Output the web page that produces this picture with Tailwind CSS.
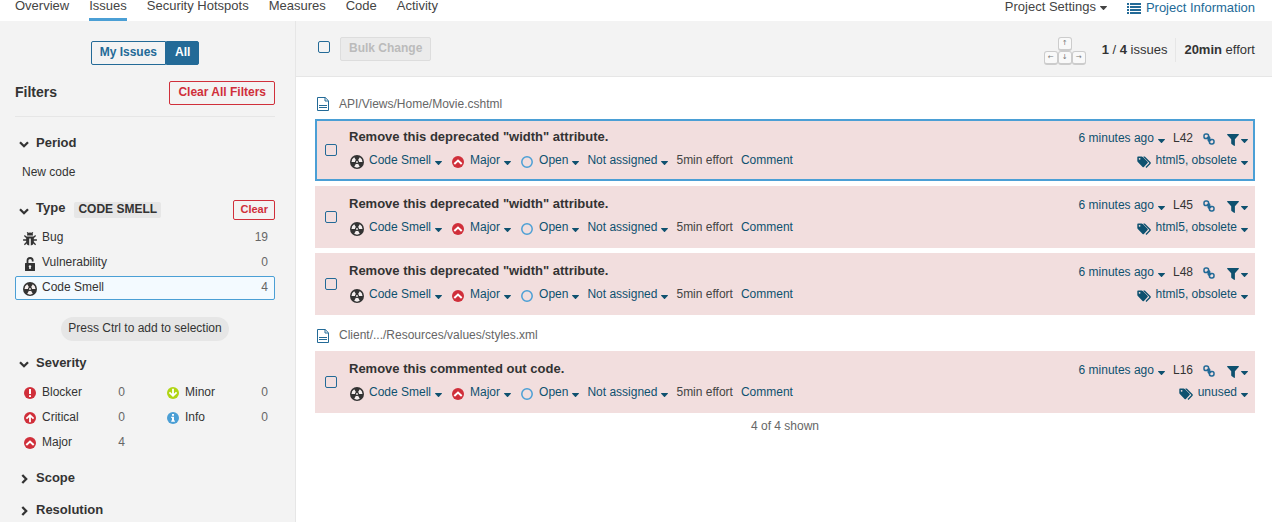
<!DOCTYPE html>
<html lang="en">
<head>
<meta charset="utf-8">
<title>Issues</title>
<script src="https://cdn.jsdelivr.net/npm/@tailwindcss/browser@4"></script>
</head>
<body class="flex min-h-screen flex-col bg-white font-['Liberation_Sans',Arial,sans-serif] text-xs text-[#333]">
<svg class="hidden" aria-hidden="true">
  <symbol id="smell" viewBox="0 0 14 14"><circle cx="7" cy="7" r="7" fill="currentColor"/><g fill="#f4eeee"><path d="M1.500 6.900A5.500 5.500 0 0 1 4.200 2.200L5.900 5.100q-.9.700-.9 1.900z"/><path d="M12.500 6.900A5.500 5.500 0 0 0 9.800 2.200L8.100 5.100q.9.700.9 1.900z"/><path d="M4.200 11.800a5.500 5.500 0 0 0 5.600 0L8.100 8.800q-1.100.6-2.200 0z"/><circle cx="7" cy="7" r=".9"/></g></symbol>
  <symbol id="bug" viewBox="0 0 14 14"><path fill="currentColor" d="M4 3.600a3 3.100 0 0 1 6 0z"/><path fill="currentColor" d="M3.200 4.400h7.600V10q0 3-3 3.500V6.500H6.200v7q-3-.5-3-3.500z"/><path fill="none" stroke="currentColor" stroke-width="1.300" d="M4 6 1.400 3.500M4 8H.1M4 10l-2.600 2.800M10 6l2.600-2.500M10 8h3.900M10 10l2.600 2.800M5.200 1.500 4.200.4M8.800 1.500l1-1.100"/></symbol>
  <symbol id="lock" viewBox="0 0 14 14"><path fill="none" stroke="currentColor" stroke-width="1.800" d="M4.500 7V3.600a2.600 2.600 0 0 1 5.200 0v.8"/><path fill="currentColor" fill-rule="evenodd" d="M2.500 6h9a.5.5 0 0 1 .5.5v7a.5.5 0 0 1-.5.500h-9a.5.5 0 0 1-.5-.500v-7a.5.5 0 0 1 .5-.500zM7 8.200a1.300 1.300 0 0 0-.8 2.300v1.500h1.600v-1.500A1.300 1.300 0 0 0 7 8.200z"/></symbol>
  <symbol id="major" viewBox="0 0 12 12"><circle cx="6" cy="6" r="6" fill="#d02f3a"/><path fill="none" stroke="#fff" stroke-width="2" d="M2.300 7.900 6 4.500l3.700 3.400"/></symbol>
  <symbol id="blocker" viewBox="0 0 12 12"><circle cx="6" cy="6" r="6" fill="#d02f3a"/><path fill="#fff" d="M5 2h2v5H5zM5 8.200h2V10H5z"/></symbol>
  <symbol id="critical" viewBox="0 0 12 12"><circle cx="6" cy="6" r="6" fill="#d02f3a"/><path fill="none" stroke="#fff" stroke-width="1.800" d="M6 10.200V3.600M2.400 6.600 6 3.200l3.600 3.400"/></symbol>
  <symbol id="minor" viewBox="0 0 12 12"><circle cx="6" cy="6" r="6" fill="#b0d513"/><path fill="none" stroke="#fff" stroke-width="1.800" d="M6 1.800v6.600M2.400 5.400 6 8.800l3.600-3.400"/></symbol>
  <symbol id="info" viewBox="0 0 12 12"><circle cx="6" cy="6" r="6" fill="#4b9fd5"/><path fill="#fff" d="M5 2h2v1.700H5zM4.200 4.700H7v3.900h.9v1.200H4.200V8.600H5V5.900h-.8z"/></symbol>
  <symbol id="open" viewBox="0 0 12 12"><circle cx="6" cy="6" r="5.200" fill="none" stroke="#4b9fd5" stroke-width="1.500"/></symbol>
  <symbol id="caret" viewBox="0 0 7 4"><path fill="currentColor" d="M.4 0h6.200q.6.300.2.800L4 3.700q-.5.400-1 0L.2.800Q-.2.300.4 0z"/></symbol>
  <symbol id="down" viewBox="0 0 10 7"><path fill="none" stroke="currentColor" stroke-width="2.300" d="M1 1.300 5 5.200l4-3.900"/></symbol>
  <symbol id="right" viewBox="0 0 7 10"><path fill="none" stroke="currentColor" stroke-width="2.300" d="M1.300 1 5.200 5 1.300 9"/></symbol>
  <symbol id="file" viewBox="0 0 12 14"><path fill="none" stroke="#236a97" d="M.5.500h7.700l3.300 3.300v9.700H.5zM8 .5V4h3.500M2 8.500h8M2 10.500h8"/></symbol>
  <symbol id="link" viewBox="0 0 12 12"><g fill="none" stroke="#236a97" stroke-width="1.500"><rect x="1" y="1" width="4.600" height="4.600" rx="1.900"/><rect x="6.400" y="6.400" width="4.600" height="4.600" rx="1.900"/><path d="M4 4l4 4M5.600 3.600q1.600.6 1 2.400M6.400 8.400q-1.600-.6-1-2.400"/></g></symbol>
  <symbol id="filter" viewBox="0 0 12 12"><path fill="currentColor" d="M.5 0h11q.7.400.2 1L7.900 5.200V11.500q-.3.700-.9.200L4.500 9.900q-.3-.3-.3-.6V5.200L.3 1Q-.2.400.5 0z"/></symbol>
  <symbol id="tags" viewBox="0 0 14 12"><path fill="currentColor" d="M1 .5h3.600q.7 0 1.200.5l4.800 4.800q.6.700 0 1.300l-3.700 3.900q-.6.600-1.300 0L.8 6Q.3 5.500.3 4.800V1.200Q.3.500 1 .5z"/><circle cx="2.600" cy="2.800" r=".9" fill="#f2dede"/><path fill="none" stroke="currentColor" stroke-width="1.300" d="M6.600.9q.6 0 1 .4l5.300 5.200q.5.500 0 1l-3.900 4"/></symbol>
</svg>

<nav class="flex h-[21px] shrink-0 justify-between pr-[17px] pl-[15px] text-[13px] leading-3 text-[#444]">
  <div class="flex gap-5">
    <a href="#">Overview</a>
    <a href="#" class="border-b-3 border-[#4b9fd5]">Issues</a>
    <a href="#">Security Hotspots</a>
    <a href="#">Measures</a>
    <a href="#">Code</a>
    <a href="#">Activity</a>
  </div>
  <div class="flex items-start gap-5">
    <button class="flex items-center gap-1 leading-[14px]">Project Settings<svg class="mt-0.5 h-1 w-[7px]"><use href="#caret"/></svg></button>
    <a href="#" class="flex items-center gap-[5px] leading-4 text-[#236a97]">
      <svg class="h-[11px] w-3.5" viewBox="0 0 14 11"><path fill="currentColor" d="M0 0h2v2H0zM3 0h11v2H3zM0 3h2v2H0zM3 3h11v2H3zM0 6h2v2H0zM3 6h11v2H3zM0 9h2v2H0zM3 9h11v2H3z"/></svg>Project Information</a>
  </div>
</nav>

<div class="flex flex-1">
  <aside class="w-[296px] shrink-0 border-r border-[#e6e6e6] bg-[#f3f3f3] pt-5 pr-5 pl-[15px]">
    <div class="flex justify-center font-bold leading-5">
      <button class="rounded-l-xs border border-[#236a97] px-2 pb-0.5 text-[#236a97]">My Issues</button>
      <button class="rounded-r-xs border border-[#236a97] bg-[#236a97] px-2 pb-0.5 text-white">All</button>
    </div>
    <div class="mt-4 flex items-center justify-between border-b border-[#e6e6e6] pb-[11px]">
      <h2 class="pb-0.5 text-sm font-bold">Filters</h2>
      <button class="rounded-xs border border-[#d02f3a] px-2 pb-0.5 font-bold leading-5 text-[#d02f3a]">Clear All Filters</button>
    </div>

    <section class="mt-4">
      <button class="flex h-5 items-center gap-[7px] pl-1 text-[13px] font-bold"><svg class="mt-0.5 h-[7px] w-2.5"><use href="#down"/></svg>Period</button>
      <button class="mt-[7px] block px-[7px] leading-6">New code</button>
    </section>

    <section class="mt-4">
      <div class="flex h-5 items-center">
        <button class="flex items-center gap-[7px] pb-1 pl-1 text-[13px] font-bold leading-4"><svg class="mt-1.5 h-[7px] w-2.5"><use href="#down"/></svg>Type</button>
        <span class="mb-px ml-[9px] rounded-xs bg-[#e6e6e6] px-1 pb-0.5 font-bold leading-[14px]">CODE SMELL</span>
        <button class="ml-auto rounded-xs border border-[#d02f3a] px-1.5 pb-0.5 text-[11px] font-bold leading-4 text-[#d02f3a]">Clear</button>
      </div>
      <div class="mt-1.5 flex flex-col gap-px">
        <button class="flex h-6 items-center gap-1 px-[7px] pb-0.5"><svg class="mt-1 h-3.5 w-4"><use href="#bug"/></svg>Bug<span class="ml-auto text-[#666]">19</span></button>
        <button class="flex h-6 items-center gap-1 px-[7px] pb-0.5"><svg class="mt-1 h-3.5 w-4"><use href="#lock"/></svg>Vulnerability<span class="ml-auto text-[#666]">0</span></button>
        <button class="flex h-6 items-center gap-1 rounded-xs border border-[#4b9fd5] bg-[#f3faff] px-1.5 pb-0.5"><svg class="mt-1 h-3.5 w-4"><use href="#smell"/></svg>Code Smell<span class="ml-auto text-[#666]">4</span></button>
      </div>
      <div class="mt-[17px] flex justify-center"><span class="rounded-full bg-[#e6e6e6] px-[7px] pb-0.5 leading-[22px]">Press Ctrl to add to selection</span></div>
    </section>

    <section class="mt-3">
      <button class="flex h-5 items-center gap-[7px] pl-1 text-[13px] font-bold"><svg class="mt-0.5 h-[7px] w-2.5"><use href="#down"/></svg>Severity</button>
      <div class="mt-[7px] grid grid-cols-2 gap-x-[26px] gap-y-px">
        <button class="flex h-6 items-center gap-1 px-[7px]"><svg class="mt-0.5 h-3 w-4"><use href="#blocker"/></svg>Blocker<span class="ml-auto text-[#666]">0</span></button>
        <button class="flex h-6 items-center gap-1 px-[7px]"><svg class="mt-0.5 h-3 w-4"><use href="#minor"/></svg>Minor<span class="ml-auto text-[#666]">0</span></button>
        <button class="flex h-6 items-center gap-1 px-[7px]"><svg class="mt-0.5 h-3 w-4"><use href="#critical"/></svg>Critical<span class="ml-auto text-[#666]">0</span></button>
        <button class="flex h-6 items-center gap-1 px-[7px]"><svg class="mt-0.5 h-3 w-4"><use href="#info"/></svg>Info<span class="ml-auto text-[#666]">0</span></button>
        <button class="flex h-6 items-center gap-1 px-[7px]"><svg class="mt-0.5 h-3 w-4"><use href="#major"/></svg>Major<span class="ml-auto text-[#666]">4</span></button>
      </div>
    </section>

    <button class="mt-3.5 flex h-5 items-center gap-2 pl-1.5 text-[13px] font-bold"><svg class="mt-0.5 h-2.5 w-[7px]"><use href="#right"/></svg>Scope</button>
    <button class="mt-3 flex h-5 items-center gap-2 pl-1.5 text-[13px] font-bold"><svg class="mt-0.5 h-2.5 w-[7px]"><use href="#right"/></svg>Resolution</button>
  </aside>

  <main class="min-w-0 flex-1">
    <header class="flex h-14 items-center border-b border-[#e6e6e6] bg-[#f3f3f3] pr-[17px] pl-[22px]">
      <input type="checkbox" aria-label="Select all issues" class="mr-2.5 mb-1 size-3 appearance-none rounded-xs border border-[#236a97]">
      <button disabled class="rounded-xs border border-[#ddd] bg-[#ebebeb] px-2 pb-0.5 font-bold leading-5 text-[#bbb]">Bulk Change</button>
      <div class="mt-1 ml-auto grid grid-cols-3 text-center text-[7px] leading-[11px] text-[#777]">
        <kbd class="col-start-2 size-3.5 rounded-[3px] border border-b-2 border-[#ccc] bg-[#f9f9f9] font-['DejaVu_Sans',sans-serif]">↑</kbd>
        <kbd class="col-start-1 size-3.5 rounded-[3px] border border-b-2 border-[#ccc] bg-[#f9f9f9] font-['DejaVu_Sans',sans-serif]">←</kbd>
        <kbd class="size-3.5 rounded-[3px] border border-b-2 border-[#ccc] bg-[#f9f9f9] font-['DejaVu_Sans',sans-serif]">↓</kbd>
        <kbd class="size-3.5 rounded-[3px] border border-b-2 border-[#ccc] bg-[#f9f9f9] font-['DejaVu_Sans',sans-serif]">→</kbd>
      </div>
      <p class="mt-0.5 ml-4 border-r border-[#e6e6e6] pr-2 text-[13px] leading-6"><b>1</b> / <b>4</b> issues</p>
      <p class="mt-0.5 ml-2 text-[13px] leading-6"><b>20min</b> effort</p>
    </header>
    <div class="pr-[17px] pl-[19px]">
      <h2 class="mt-[19px] flex h-4 items-center gap-2.5 pl-0.5 text-[#666]"><svg class="h-3.5 w-3"><use href="#file"/></svg>API/Views/Home/Movie.cshtml</h2>
      <ul id="movie" class="mt-[7px] flex flex-col gap-[5px]"></ul>
      <h2 class="mt-3 flex h-4 items-center gap-2.5 pl-0.5 text-[#666]"><svg class="mt-0.5 h-3.5 w-3"><use href="#file"/></svg>Client/.../Resources/values/styles.xml</h2>
      <ul id="styles" class="mt-2 flex flex-col gap-[5px]"></ul>
      <p class="mt-[5px] text-center leading-4 text-[#666]">4 of 4 shown</p>
    </div>
  </main>
</div>

<script>
const caret = '<svg class="mt-1.5 h-1 w-[7px]"><use href="#caret"/></svg>';
const issue = (title, line, tags, border) => `
<li class="flex h-[62px] items-center border-2 ${border} bg-[#f2dede] pr-[5px] pl-2 text-[#0e516f]">
  <input type="checkbox" aria-label="Select issue on line ${line}" class="mr-3 size-3 shrink-0 appearance-none rounded-xs border border-[#236a97]">
  <div class="min-w-0 flex-1 pb-1">
    <div class="flex h-6 items-center">
      <h3 class="mb-0.5 text-[13px] font-bold leading-5 text-[#333]">${title}</h3>
      <div class="ml-auto flex items-center gap-2">
        <button class="flex items-center gap-1">6 minutes ago${caret}</button>
        <span class="text-[#333]">L${line}</span>
        <a href="#" aria-label="Link to issue"><svg class="mt-0.5 h-3 w-4"><use href="#link"/></svg></a>
        <button class="flex items-center" aria-label="Similar issues"><svg class="mt-1 h-3 w-4"><use href="#filter"/></svg>${caret}</button>
      </div>
    </div>
    <div class="flex h-5 items-center gap-2">
      <button class="flex items-center gap-1"><svg class="mt-1 h-3.5 w-4 text-[#333]"><use href="#smell"/></svg>Code Smell${caret}</button>
      <button class="flex items-center gap-1"><svg class="mt-1 h-3 w-4"><use href="#major"/></svg>Major${caret}</button>
      <button class="flex items-center gap-1"><svg class="mt-1 h-3 w-4"><use href="#open"/></svg>Open${caret}</button>
      <button class="flex items-center gap-1">Not assigned${caret}</button>
      <span class="text-[#444]">5min effort</span>
      <button>Comment</button>
      <button class="ml-auto flex items-center gap-1"><svg class="mt-1 mr-px h-3 w-3.5"><use href="#tags"/></svg>${tags}${caret}</button>
    </div>
  </div>
</li>`;
const width = 'Remove this deprecated "width" attribute.';
document.getElementById('movie').innerHTML =
  issue(width, 42, 'html5, obsolete', 'border-[#4b9fd5]') +
  issue(width, 45, 'html5, obsolete', 'border-transparent') +
  issue(width, 48, 'html5, obsolete', 'border-transparent');
document.getElementById('styles').innerHTML =
  issue('Remove this commented out code.', 16, 'unused', 'border-transparent');
</script>
</body>
</html>
